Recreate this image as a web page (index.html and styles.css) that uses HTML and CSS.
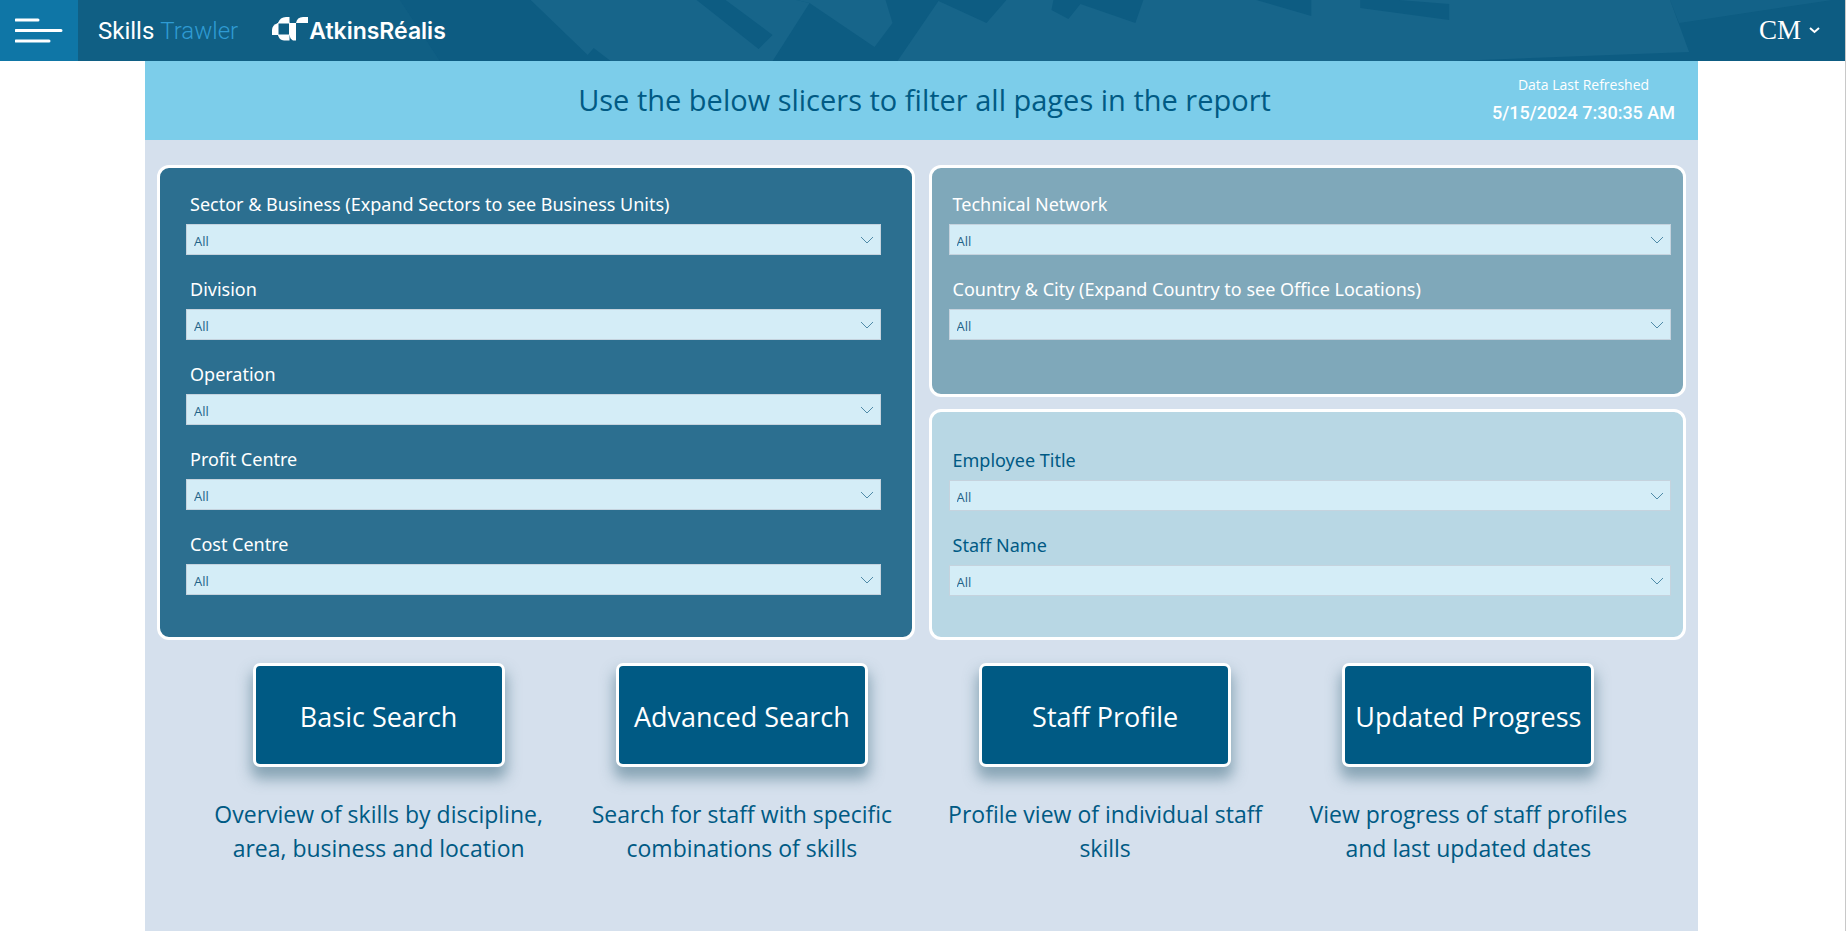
FILE: index.html
```html
<!DOCTYPE html>
<html lang="en">
<head>
    <meta charset="UTF-8">
    <meta name="viewport" content="width=device-width, initial-scale=1.0">
    <title>Skills Trawler</title>
    <link rel="stylesheet" href="styles.css">
</head>
<body>

<header class="topbar">
    <svg class="topbar-art" viewBox="0 0 1846 61" preserveAspectRatio="none" aria-hidden="true">
        <g fill="#17658a">
            <path d="M78 0H400L440 61H78Z" opacity="0.35"/>
            <path d="M531 0H697L759 49L773 35L726 0H797L810 3L773 61H611L594 48L588 55Z"/>
            <path d="M797 0H886L893 23L875 47L810 3Z"/>
            <path d="M898 61L939 1L987 23L1007 0H1054L1052 10L1069 19L1081 4L1136 23L1144 0H1257L1312 16V0H1361V8L1450 20V4L1400 0H1671L1690 52L1455 61Z"/>
            <path d="M1671 0H1833L1680 23Z" opacity="0.7"/>
        </g>
    </svg>
    <button class="menu-btn" aria-label="Menu">
        <svg width="48" height="25" viewBox="0 0 48 25" stroke="#fff" stroke-width="3" stroke-linecap="round">
            <path d="M1 2H23M1 12.500H46M1 23H34"/>
        </svg>
    </button>
    <a class="app-name" href="#">Skills <span>Trawler</span></a>
    <a class="brand" href="#">
        <svg width="36" height="24" viewBox="0 0 36 24" fill="#fff">
            <path d="M6 6Q8 0 14 0H17.500V6Z"/>
            <path d="M6 6V18H0V13Q0 8 6 6Z"/>
            <path d="M6 18H17.500V23.500H12Q7 23 6 18Z"/>
            <path d="M17.500 6H24V23.500H21Q18 22 17.500 18Z"/>
            <path d="M24 6Q25 0 31 0H36V6Z"/>
            <path d="M6 6H17.500V18H6Z" fill="none" stroke="#fff"/>
        </svg>
        <span>AtkinsRéalis</span>
    </a>
    <button class="user-btn">
        CM
        <svg width="11" height="7" viewBox="0 0 11 7" fill="none" stroke="#fff" stroke-width="2"><path d="M1 1L5.500 5L10 1"/></svg>
    </button>
</header>

<main class="report">
    <section class="banner">
        <h1>Use the below slicers to filter all pages in the report</h1>
        <div class="refreshed">
            <p>Data Last Refreshed</p>
            <strong>5/15/2024 7:30:35 AM</strong>
        </div>
    </section>

    <section class="panels">
        <div class="panel panel-org">
            <div class="slicer">
                <label for="sector">Sector &amp; Business (Expand Sectors to see Business Units)</label>
                <select id="sector"><option>All</option></select>
            </div>
            <div class="slicer">
                <label for="division">Division</label>
                <select id="division"><option>All</option></select>
            </div>
            <div class="slicer">
                <label for="operation">Operation</label>
                <select id="operation"><option>All</option></select>
            </div>
            <div class="slicer">
                <label for="profit">Profit Centre</label>
                <select id="profit"><option>All</option></select>
            </div>
            <div class="slicer">
                <label for="cost">Cost Centre</label>
                <select id="cost"><option>All</option></select>
            </div>
        </div>
        <div class="panel panel-network">
            <div class="slicer">
                <label for="network">Technical Network</label>
                <select id="network"><option>All</option></select>
            </div>
            <div class="slicer">
                <label for="country">Country &amp; City (Expand Country to see Office Locations)</label>
                <select id="country"><option>All</option></select>
            </div>
        </div>
        <div class="panel panel-staff">
            <div class="slicer">
                <label for="title">Employee Title</label>
                <select id="title"><option>All</option></select>
            </div>
            <div class="slicer">
                <label for="staff">Staff Name</label>
                <select id="staff"><option>All</option></select>
            </div>
        </div>
    </section>

    <section class="actions">
        <div class="action">
            <button>Basic Search</button>
            <p>Overview of skills by discipline,<br>area, business and location</p>
        </div>
        <div class="action">
            <button>Advanced Search</button>
            <p>Search for staff with specific<br>combinations of skills</p>
        </div>
        <div class="action">
            <button>Staff Profile</button>
            <p>Profile view of individual staff<br>skills</p>
        </div>
        <div class="action">
            <button>Updated Progress</button>
            <p>View progress of staff profiles<br>and last updated dates</p>
        </div>
    </section>
</main>

</body>
</html>
```
FILE: styles.css
```css
* {
    box-sizing: border-box;
}
body {
    margin: 0;
    min-height: 100vh;
    display: flex;
    flex-direction: column;
    font-family: "Open Sans", "Noto Sans", sans-serif;
    background-color: #fff;
    border-right: 1px solid #c8c8c8;
}
h1, p {
    margin: 0;
    font-weight: normal;
}
button {
    font-family: inherit;
    cursor: pointer;
}

/* top bar */
.topbar {
    position: relative;
    display: flex;
    align-items: center;
    height: 61px;
    background-color: #0d5c82;
    color: #fff;
}
.topbar-art {
    position: absolute;
    top: 0;
    left: 0;
    width: 100%;
    height: 100%;
}
.topbar a,
.topbar button {
    position: relative;
    color: #fff;
    text-decoration: none;
}
.menu-btn {
    display: flex;
    align-items: center;
    width: 78px;
    height: 61px;
    padding: 0 0 0 15px;
    border: 0;
    background-color: #0f76a6;
}
.app-name {
    margin-left: 20px;
    font: 24px Roboto, sans-serif;
}
.app-name span {
    font-weight: 300;
    color: #2f9bd3;
}
.brand {
    display: flex;
    align-items: center;
    gap: 1px;
    margin-left: 34px;
    font: 600 23px Inter, sans-serif;
}
.brand svg {
    margin-bottom: 4px;
}
.user-btn {
    display: flex;
    align-items: center;
    gap: 8px;
    margin-left: auto;
    padding: 0 25px 0 0;
    border: 0;
    background: none;
    font: 27px "Liberation Serif", serif;
}

/* report page */
.report {
    flex: 1;
    margin: 0 147px 0 145px;
    background-color: #d5e0ed;
}
.banner {
    display: grid;
    grid-template-columns: 1fr auto 1fr;
    align-items: center;
    height: 79px;
    padding-bottom: 3px;
    background-color: #7ccdea;
}
.banner h1 {
    grid-column: 2;
    padding-left: 6px;
    font-size: 29px;
    color: #005a84;
}
.refreshed {
    justify-self: end;
    padding-right: 23px;
    text-align: center;
    color: #fff;
}
.refreshed p {
    font-size: 14px;
    line-height: 28px;
}
.refreshed strong {
    display: block;
    font: 500 18px/28px Roboto, sans-serif;
}

/* slicer panels */
.panels {
    display: grid;
    grid-template-columns: 1fr 1fr;
    grid-template-rows: 1fr 1fr;
    gap: 12px 14px;
    padding: 25px 12px 0;
}
.panel {
    display: flex;
    flex-direction: column;
    gap: 22px;
    padding: 24px 12px 41px 17px;
    border: 3px solid #fff;
    border-radius: 12px;
    color: #fff;
}
.panel-org {
    grid-row: span 2;
    padding: 24px 31px 42px 26px;
    background-color: #2c6f90;
}
.panel-network {
    background-color: #7fa8ba;
}
.panel-staff {
    justify-content: flex-end;
    background-color: #b8d7e4;
    color: #005a84;
}
.slicer label {
    display: block;
    padding: 0 4px;
    font-family: "Noto Sans", sans-serif;
    font-size: 18px;
    line-height: 24px;
    margin-bottom: 8px;
}
.slicer select {
    display: block;
    width: 100%;
    height: 31px;
    padding: 3px 7px 0;
    appearance: none;
    border: 1px solid #c5d3de;
    border-radius: 0;
    background: #d4edf7 url("data:image/svg+xml,%3Csvg xmlns='http://www.w3.org/2000/svg' width='14' height='8' fill='none' stroke='%234f8ba8'%3E%3Cpath d='M1 1l6 6 6-6'/%3E%3C/svg%3E") no-repeat right 6px center;
    font: 13px "Open Sans", sans-serif;
    color: #1f6388;
}

/* navigation buttons */
.actions {
    display: grid;
    grid-template-columns: repeat(4, 1fr);
    padding: 23px 48px 40px 52px;
    text-align: center;
}
.action button {
    width: 252px;
    height: 104px;
    padding: 3px 0 0;
    border: 3px solid #fff;
    border-radius: 7px;
    background-color: #005a84;
    box-shadow: 0 10px 14px 2px rgba(60, 105, 125, 0.5);
    font-size: 27px;
    white-space: nowrap;
    color: #fff;
}
.action p {
    margin-top: 30px;
    font-size: 23px;
    line-height: 34px;
    color: #005a84;
}
```
